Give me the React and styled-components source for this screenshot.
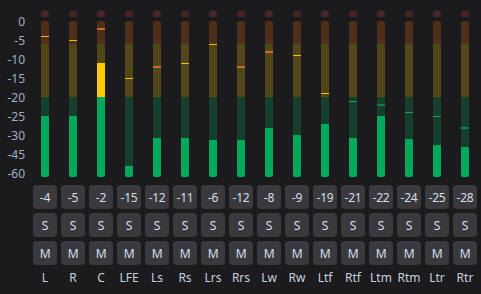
import React from "react"
import styled, { createGlobalStyle } from "styled-components"

const GlobalStyle = createGlobalStyle`
  html, body {
    margin: 0;
    padding: 0;
    background: #1b1b1d;
  }
  body {
    font-family: "Noto Sans", "Liberation Sans", sans-serif;
  }
`

const BAR_HEIGHT = 156
const BROWN_END = 23
const OLIVE_END = 76

// dB -> pixel offset from the top of the bar (scale is 0..-30 linear, then -45, -60)
const dbToOffset = db => {
  const v = -db
  if (v <= 30) return (v / 5) * 19
  if (v <= 45) return 114 + ((v - 30) / 15) * 19
  return 133 + ((v - 45) / 15) * 19
}

const channels = [
  { name: "L", peak: -4, level: -25 },
  { name: "R", peak: -5, level: -25 },
  { name: "C", peak: -2, level: -11 },
  { name: "LFE", peak: -15, level: -54.5 },
  { name: "Ls", peak: -12, level: -32.4 },
  { name: "Rs", peak: -11, level: -32.4 },
  { name: "Lrs", peak: -6, level: -33.9 },
  { name: "Rrs", peak: -12, level: -33.9 },
  { name: "Lw", peak: -8, level: -28.2 },
  { name: "Rw", peak: -9, level: -30 },
  { name: "Ltf", peak: -19, level: -27.1 },
  { name: "Rtf", peak: -21, level: -32.4 },
  { name: "Ltm", peak: -22, level: -25 },
  { name: "Rtm", peak: -24, level: -33.2 },
  { name: "Ltr", peak: -25, level: -37.9 },
  { name: "Rtr", peak: -28, level: -39.5 },
]

const scale = ["0", "-5", "-10", "-15", "-20", "-25", "-30", "-45", "-60"]

const Page = styled.div`
  display: flex;
  width: 481px;
  height: 294px;
  background: #1b1b1d;
  overflow: hidden;
`

const Scale = styled.div`
  display: flex;
  flex-direction: column;
  width: 25px;
  padding-top: 12px;
  margin-right: 6px;
`

const ScaleLabel = styled.div`
  height: 19px;
  line-height: 19px;
  font-size: 12px;
  text-align: right;
  color: #a0aec2;
`

const Channels = styled.div`
  display: flex;
`

const Channel = styled.div`
  width: 28px;
  display: flex;
  flex-direction: column;
  align-items: center;
`

const Clip = styled.div`
  width: 8px;
  height: 6px;
  margin-top: 11px;
  border-radius: 2px;
  background: #4b2328;
`

const Bar = styled.div`
  position: relative;
  width: 8px;
  height: ${BAR_HEIGHT}px;
  margin-top: 4px;
  border-radius: 2px;
  overflow: hidden;
  background: linear-gradient(
    to bottom,
    #4f2f19 0,
    #4f2f19 ${BROWN_END}px,
    #514617 ${BROWN_END}px,
    #514617 ${OLIVE_END}px,
    #163f2b ${OLIVE_END}px
  );
`

const Fill = styled.div`
  position: absolute;
  left: 0;
  right: 0;
  bottom: 0;
  background: linear-gradient(
    to top,
    #00a95c 0,
    #00a95c ${BAR_HEIGHT - OLIVE_END}px,
    #ffcc00 ${BAR_HEIGHT - OLIVE_END}px
  );
`

const Peak = styled.div`
  position: absolute;
  left: 0;
  right: 0;
  height: ${p => (p.$soft ? 2 : 1)}px;
  background: ${p => p.$color};
`

const Buttons = styled.div`
  display: flex;
  flex-direction: column;
  gap: 4px;
  margin-top: 8px;
`

const Button = styled.div`
  width: 24px;
  height: 24px;
  border-radius: 4px;
  background: #3a3a3e;
  color: #d7dde7;
  font-size: 12px;
  display: flex;
  align-items: center;
  justify-content: center;
  letter-spacing: -0.2px;
`

const Name = styled.div`
  margin-top: 3px;
  font-size: 12px;
  line-height: 20px;
  color: #c6d1df;
  white-space: nowrap;
`

const peakStyle = db => {
  const y = dbToOffset(db)
  const base = Math.floor(y)
  const frac = y - base
  const green = y >= OLIVE_END
  if (frac < 0.25 || frac > 0.75) {
    return {
      top: frac > 0.75 ? base + 1 : base,
      soft: false,
      color: green ? "#17a160" : "#f3bd0c",
    }
  }
  return { top: base, soft: true, color: green ? "#12804c" : "#c46c2a" }
}

const Meter = ({ peak, level }) => {
  const p = peakStyle(peak)
  const fillHeight = BAR_HEIGHT - Math.round(dbToOffset(level))
  return (
    <Bar>
      <Fill style={{ height: fillHeight }} />
      <Peak $soft={p.soft} $color={p.color} style={{ top: p.top }} />
    </Bar>
  )
}

const App = () => (
  <Page>
    <GlobalStyle />
    <Scale>
      {scale.map(s => (
        <ScaleLabel key={s}>{s}</ScaleLabel>
      ))}
    </Scale>
    <Channels>
      {channels.map(ch => (
        <Channel key={ch.name}>
          <Clip />
          <Meter peak={ch.peak} level={ch.level} />
          <Buttons>
            <Button>{ch.peak}</Button>
            <Button>S</Button>
            <Button>M</Button>
          </Buttons>
          <Name>{ch.name}</Name>
        </Channel>
      ))}
    </Channels>
  </Page>
)

export default App
